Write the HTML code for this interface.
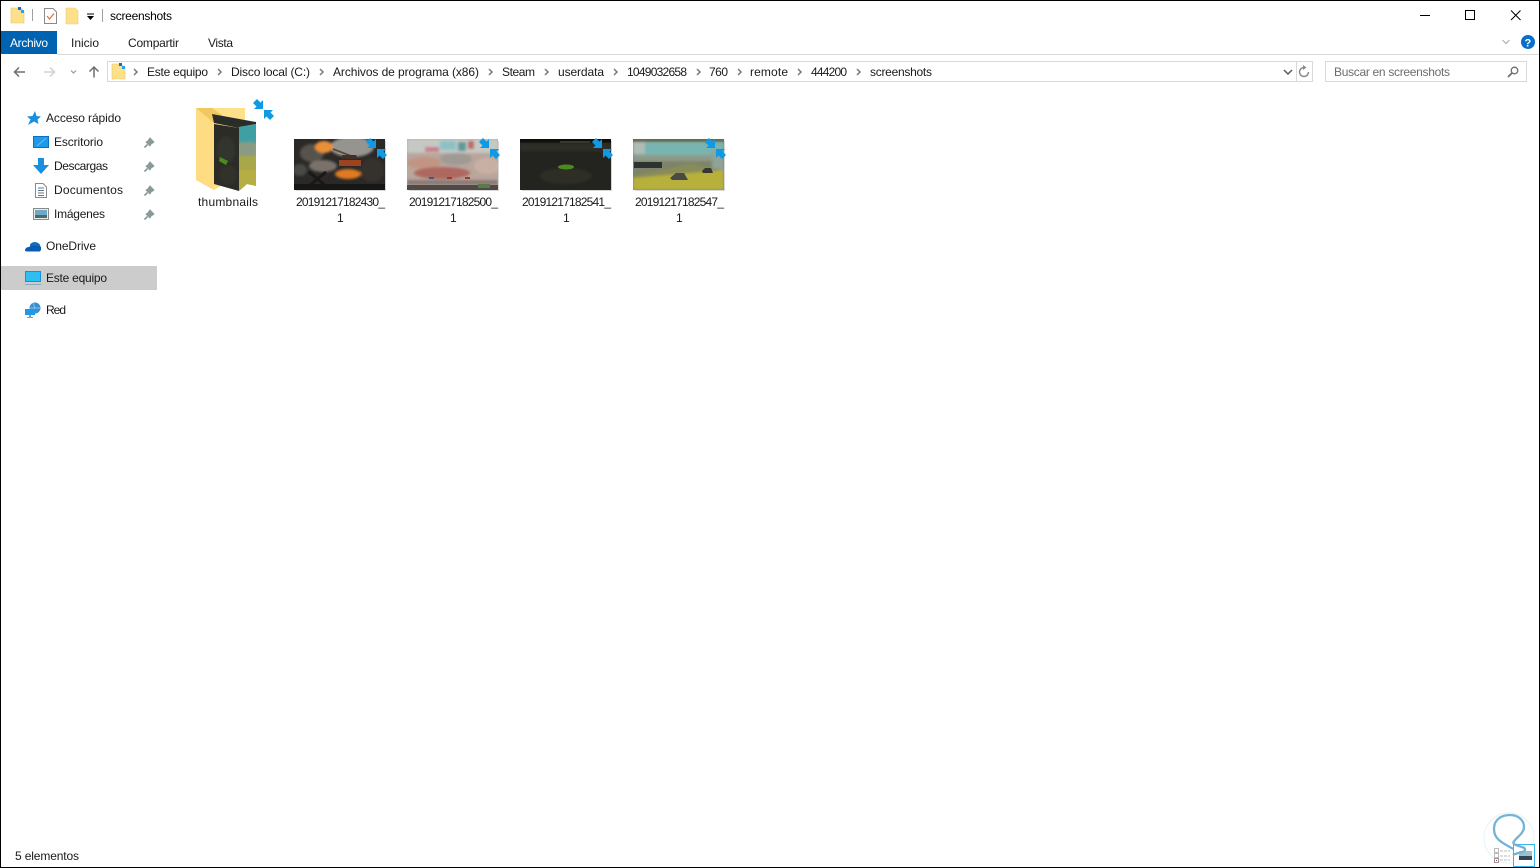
<!DOCTYPE html>
<html lang="es"><head><meta charset="utf-8"><title>screenshots</title>
<style>
html,body{margin:0;padding:0;background:#fff;width:1540px;height:868px;overflow:hidden}
svg{display:block}
text{font-family:"Liberation Sans",sans-serif;font-size:12px;fill:#000}
.g{fill:#1a1a1a}
</style></head><body>
<svg width="1540" height="868" viewBox="0 0 1540 868" xmlns="http://www.w3.org/2000/svg">
<defs>
<g id="arr">
<path d="M10 10 L1 10 L3.500 7.500 L0 4 L4 0 L7.500 3.500 L10 1Z" fill="#0f9ae6"/>
<path d="M11 11 L20 11 L17.500 13.500 L21 17 L17 21 L13.500 17.500 L11 20Z" fill="#0f9ae6"/>
</g>
<path id="pin" d="M3.500 7.500 L0.500 10.500 M2 4.500 L6.500 9 M3.500 5 L6 1.500 L9.500 5 L6 7.500" stroke="#8a9a9a" stroke-width="1.600" fill="#8a9a9a"/>
<path id="chev" d="M0 0 L3 3 L0 6" fill="none" stroke="#7a7a7a" stroke-width="1.500"/>
<filter id="b1" x="-30%" y="-30%" width="160%" height="160%"><feGaussianBlur stdDeviation="1.300"/></filter>
<clipPath id="c1"><rect x="294" y="139" width="91" height="51"/></clipPath>
<clipPath id="c2"><rect x="407" y="139" width="91" height="51"/></clipPath>
<clipPath id="c3"><rect x="520" y="139" width="91" height="51"/></clipPath>
<clipPath id="c4"><rect x="633" y="139" width="91" height="51"/></clipPath>
<clipPath id="cf"><path d="M214 124 L239 128 V191 L214 184Z"/></clipPath>
<clipPath id="cr"><path d="M239 127 L256 124 V186 L247 184 L239 191Z"/></clipPath>
</defs>

<!-- window frame -->
<rect x=".5" y=".5" width="1539" height="867" fill="#fff" stroke="#000"/>

<!-- title bar icons -->
<path d="M11 8 H21 L24 11 V23 H11Z" fill="#fde08a" stroke="#e8c468" stroke-width=".6"/>
<rect x="18" y="7" width="3" height="3" fill="#0f6fc0"/><rect x="21" y="10" width="3" height="3" fill="#2ba0e6"/>
<rect x="32" y="9" width="1" height="12" fill="#a0a0a0"/>
<path d="M44.500 8.500 H53 L56.500 12 V23.500 H44.500Z" fill="#fff" stroke="#8a8a8a"/>
<path d="M47 16 L49.500 19 L54 13.500" fill="none" stroke="#e0763a" stroke-width="1.300"/>
<path d="M66 8 H75 L78 11 V24 H66Z" fill="#fddf8c" stroke="#f0cc70" stroke-width=".6"/>
<rect x="87" y="13.500" width="7" height="1" fill="#000"/><path d="M87 16 H94 L90.500 20Z" fill="#000"/>
<rect x="102" y="9" width="1" height="13" fill="#a0a0a0"/>
<text x="110" y="20" textLength="62">screenshots</text>

<!-- window controls -->
<rect x="1420" y="15" width="10" height="1" fill="#000"/>
<rect x="1465.500" y="10.500" width="9" height="9" fill="none" stroke="#000"/>
<path d="M1511 10.500 L1520.500 20 M1520.500 10.500 L1511 20" stroke="#000" stroke-width="1" fill="none"/>

<!-- ribbon -->
<rect x="1" y="31" width="56" height="23" fill="#0063b1"/>
<text x="10" y="47" textLength="38" style="fill:#fff">Archivo</text>
<text x="71" y="47" textLength="28" class="g">Inicio</text>
<text x="128" y="47" textLength="51" class="g">Compartir</text>
<text x="208" y="47" textLength="25" class="g">Vista</text>
<rect x="57" y="54" width="1482" height="1" fill="#d9d9d9"/>
<path d="M1502.500 40 L1506 43.500 L1509.500 40" fill="none" stroke="#b0b0b0" stroke-width="1.200"/>
<circle cx="1528" cy="42" r="7" fill="#0a6fc8"/>
<text x="1524.500" y="46.500" style="fill:#fff;font-size:11px;font-weight:bold">?</text>

<!-- nav buttons -->
<path d="M15 72 H25 M19 67.500 L14.500 72 L19 76.500" fill="none" stroke="#6e6e6e" stroke-width="1.500"/>
<path d="M44 72 H54 M50 67.500 L54.500 72 L50 76.500" fill="none" stroke="#d2d2d2" stroke-width="1.500"/>
<path d="M71 70.500 L73.500 73 L76 70.500" fill="none" stroke="#9a9a9a" stroke-width="1.200"/>
<path d="M94 77.500 V67 M89.500 71.500 L94 67 L98.500 71.500" fill="none" stroke="#6e6e6e" stroke-width="1.500"/>

<!-- address bar -->
<rect x="107.500" y="61.500" width="1205" height="20" fill="#fff" stroke="#d9d9d9"/>
<path d="M112 64 H121 L125 68 V79 H112Z" fill="#fde08a" stroke="#eec86c" stroke-width=".6"/>
<rect x="119" y="63" width="3" height="3" fill="#0f6fc0"/><rect x="122" y="66" width="3" height="3" fill="#2ba0e6"/>
<use href="#chev" x="134" y="69"/>
<text x="147" y="76" textLength="61" class="g">Este equipo</text>
<use href="#chev" x="218" y="69"/>
<text x="231" y="76" textLength="79" class="g">Disco local (C:)</text>
<use href="#chev" x="320" y="69"/>
<text x="333" y="76" textLength="146" class="g">Archivos de programa (x86)</text>
<use href="#chev" x="489" y="69"/>
<text x="502" y="76" textLength="33" class="g">Steam</text>
<use href="#chev" x="545" y="69"/>
<text x="558" y="76" textLength="46" class="g">userdata</text>
<use href="#chev" x="614" y="69"/>
<text x="627" y="76" textLength="60" class="g">1049032658</text>
<use href="#chev" x="697" y="69"/>
<text x="709" y="76" textLength="19" class="g">760</text>
<use href="#chev" x="738" y="69"/>
<text x="750" y="76" textLength="38" class="g">remote</text>
<use href="#chev" x="798" y="69"/>
<text x="811" y="76" textLength="36" class="g">444200</text>
<use href="#chev" x="857" y="69"/>
<text x="870" y="76" textLength="62" class="g">screenshots</text>
<path d="M1284 70 L1288 74 L1292 70" fill="none" stroke="#5a5a5a" stroke-width="1.500"/>
<rect x="1296" y="62" width="1" height="19" fill="#d9d9d9"/>
<path d="M1308.500 72 A4.500 4.500 0 1 1 1304 67.500" fill="none" stroke="#8a8a8a" stroke-width="1.500"/>
<path d="M1303 65 L1306.500 67.500 L1303 70Z" fill="#8a8a8a"/>

<!-- search -->
<rect x="1325.500" y="61.500" width="201" height="20" fill="#fff" stroke="#d9d9d9"/>
<text x="1334" y="76" textLength="116" style="fill:#6d6d6d">Buscar en screenshots</text>
<circle cx="1514.500" cy="70.500" r="3.300" fill="none" stroke="#6e6e6e" stroke-width="1.300"/>
<path d="M1512 73 L1508 77" stroke="#6e6e6e" stroke-width="1.800"/>

<!-- nav pane -->
<path d="M35 111 L36.500 116 L41 116.500 L37.500 119.500 L38.500 124 L34 121.500 L28 125 L30.500 119.500 L27 116.500 L32.500 116Z" fill="#1a8fdf"/>
<text x="46" y="122" textLength="75" class="g">Acceso rápido</text>

<rect x="33.500" y="136.500" width="15" height="11" fill="#1e9be8" stroke="#0a6fc8"/>
<path d="M37 146 L46 138" stroke="#7cc8f2" stroke-width=".8"/>
<text x="54" y="146" textLength="49" class="g">Escritorio</text>
<use href="#pin" x="144" y="137"/>

<path d="M38 158 H44 V165 H49 L41 174 L33 165 H38Z" fill="#1a8fdf"/>
<text x="54" y="170" textLength="54" class="g">Descargas</text>
<use href="#pin" x="144" y="161"/>

<path d="M35.500 183.500 H43 L46.500 187 V197.500 H35.500Z" fill="#fff" stroke="#8a8a8a"/>
<path d="M38 188 H44 M38 190.500 H44 M38 193 H44 M38 195.500 H44" stroke="#5a7a90" stroke-width="1"/>
<text x="54" y="194" textLength="69" class="g">Documentos</text>
<use href="#pin" x="144" y="185"/>

<rect x="33.500" y="208.500" width="15" height="11" fill="#e8eef0" stroke="#8a8a8a"/>
<rect x="35" y="210" width="12" height="5" fill="#6fa9c4"/><rect x="35" y="215" width="12" height="3" fill="#4c6a6a"/>
<text x="54" y="218" textLength="51" class="g">Imágenes</text>
<use href="#pin" x="144" y="209"/>

<path d="M30 244.500 Q33 241 37 242.500 Q40 243.500 40.500 246.500 L30 247Z" fill="#0f6fc6"/>
<path d="M25 251 Q25 247 29 247 Q31 245 35 246 Q38 244.500 41 247 Q41.500 250 40 251.500 H27Z" fill="#0a5cb0"/>
<text x="46" y="250" textLength="50" class="g">OneDrive</text>

<rect x="1" y="266" width="156" height="24" fill="#cccccc"/>
<rect x="25.500" y="271.500" width="15" height="10" fill="#2cc0f2" stroke="#1a8fdf"/>
<rect x="25" y="284" width="16" height="1" fill="#8fa9b8"/>
<text x="46" y="282" textLength="61" class="g">Este equipo</text>

<circle cx="35" cy="308" r="5.500" fill="#3a8fd0"/>
<path d="M33 303 Q36 308 33 313 M30 308 H40" stroke="#a8d4ee" stroke-width=".7" fill="none"/>
<rect x="25" y="309" width="10" height="6" fill="#1e9be8"/>
<rect x="29" y="315" width="2" height="2" fill="#8a9aa8"/><rect x="27" y="317" width="6" height="1" fill="#8a9aa8"/>
<text x="46" y="314" textLength="20" class="g">Red</text>

<!-- folder thumbnails -->
<path d="M196 108 H245 V182 H228 L214 190 L196 180Z" fill="#fde08a"/>
<path d="M196 108 L214 123 V190 L196 180Z" fill="#fddc84"/>
<path d="M196 108 H212 L222 115 L214 123Z" fill="#f1c85f"/>
<path d="M212 114 L256 122 V126 L239 128 L214 123Z" fill="#2a2c2a"/>
<path d="M214 124 L239 128 V191 L214 184Z" fill="#2b2c26"/>
<g clip-path="url(#cf)">
<ellipse cx="226" cy="150" rx="9" ry="14" fill="#33342d" filter="url(#b1)"/>
<ellipse cx="228" cy="175" rx="9" ry="10" fill="#30312a" filter="url(#b1)"/>
<path d="M220 157 L228 161 L226 165 L219 161Z" fill="#4c8a1e"/>
</g>
<path d="M239 127 L256 124 V186 L247 184 L239 191Z" fill="#a8a848"/>
<g clip-path="url(#cr)">
<rect x="239" y="124" width="17" height="20" fill="#3fa0a4"/>
<rect x="239" y="142" width="17" height="14" fill="#8a9a84" filter="url(#b1)"/>
<rect x="239" y="170" width="17" height="20" fill="#b4ae44"/>
</g>
<use href="#arr" x="253" y="99"/>
<text x="198" y="206" textLength="60" class="g">thumbnails</text>

<!-- image 1 -->
<rect x="294" y="139" width="91" height="51" fill="#2a2927"/>
<rect x="385" y="141" width="1" height="50" fill="#d8d8d8"/><rect x="296" y="190" width="90" height="1" fill="#d8d8d8"/>
<g clip-path="url(#c1)">
<g filter="url(#b1)">
<ellipse cx="352" cy="147" rx="22" ry="10" fill="#96948f"/>
<ellipse cx="312" cy="153" rx="12" ry="9" fill="#57534e"/>
<ellipse cx="323" cy="166" rx="14" ry="6" fill="#7a726a"/>
<ellipse cx="300" cy="170" rx="7" ry="6" fill="#4a4844"/>
<ellipse cx="372" cy="170" rx="12" ry="12" fill="#35332f"/>
<ellipse cx="324" cy="147" rx="9" ry="6" fill="#e89038"/>
<ellipse cx="348" cy="174" rx="13" ry="5" fill="#df7a22"/>
</g>
<path d="M333 149 L354 157" stroke="#5a4030" stroke-width="1.500"/>
<path d="M342 155 H356 L358 159 H342Z" fill="#40302a"/>
<rect x="339" y="160" width="22" height="6" fill="#9c4420"/>
<rect x="294" y="184" width="91" height="6" fill="#161615"/>
<path d="M309 172 L326 186 M326 172 L309 186" stroke="#191816" stroke-width="3"/>
</g>
<use href="#arr" x="366" y="138"/>
<text x="296" y="206" textLength="89" class="g">20191217182430_</text>
<text x="337" y="222" class="g">1</text>

<!-- image 2 -->
<rect x="407" y="139" width="91" height="51" fill="#b9a69c"/>
<rect x="498" y="141" width="1" height="50" fill="#d8d8d8"/><rect x="409" y="190" width="90" height="1" fill="#d8d8d8"/>
<g clip-path="url(#c2)">
<g filter="url(#b1)">
<rect x="407" y="139" width="91" height="14" fill="#c6c8c4"/>
<rect x="440" y="141" width="16" height="9" fill="#8cc2c6"/>
<rect x="458" y="142" width="8" height="9" fill="#5f9a9a"/>
<rect x="468" y="141" width="6" height="8" fill="#bb6a62"/>
<rect x="425" y="147" width="14" height="5" fill="#c9808a"/>
<ellipse cx="456" cy="159" rx="16" ry="6" fill="#9f9a94"/>
<ellipse cx="424" cy="163" rx="17" ry="6" fill="#c29484"/>
<ellipse cx="487" cy="166" rx="13" ry="8" fill="#c9b0a4"/>
<ellipse cx="442" cy="173" rx="28" ry="6" fill="#ae675e"/>
<rect x="407" y="180" width="91" height="5" fill="#8a7a76"/>
</g>
<rect x="407" y="185" width="91" height="5" fill="#4f4a47"/>
<rect x="478" y="184" width="12" height="4" fill="#5a7a4a"/>
<rect x="429" y="177" width="5" height="2" fill="#3a5a8a"/><rect x="447" y="177" width="5" height="2" fill="#9c3a2c"/><rect x="465" y="177" width="5" height="2" fill="#9c3a2c"/>
</g>
<use href="#arr" x="479" y="138"/>
<text x="409" y="206" textLength="89" class="g">20191217182500_</text>
<text x="450" y="222" class="g">1</text>

<!-- image 3 -->
<rect x="520" y="139" width="91" height="51" fill="#23241f"/>
<rect x="611" y="141" width="1" height="50" fill="#d8d8d8"/><rect x="522" y="190" width="90" height="1" fill="#d8d8d8"/>
<g clip-path="url(#c3)">
<rect x="520" y="139" width="91" height="4" fill="#0e0e0d"/>
<rect x="560" y="141" width="30" height="2" fill="#3a3a34"/>
<rect x="520" y="143" width="91" height="8" fill="#2d2f28" filter="url(#b1)"/>
<ellipse cx="566" cy="176" rx="26" ry="8" fill="#2e2f28" filter="url(#b1)"/>
<ellipse cx="566" cy="167" rx="8" ry="2.500" fill="#4c8a1e"/>
</g>
<use href="#arr" x="592" y="138"/>
<text x="522" y="206" textLength="89" class="g">20191217182541_</text>
<text x="563" y="222" class="g">1</text>

<!-- image 4 -->
<rect x="633" y="139" width="91" height="51" fill="#7d8468"/>
<rect x="724" y="141" width="1" height="50" fill="#d8d8d8"/><rect x="635" y="190" width="90" height="1" fill="#d8d8d8"/>
<g clip-path="url(#c4)">
<rect x="633" y="139" width="91" height="3" fill="#5f6a58"/>
<g filter="url(#b1)">
<rect x="633" y="142" width="91" height="13" fill="#78b4b0"/>
<rect x="633" y="142" width="12" height="12" fill="#b0bcb4"/>
<rect x="633" y="155" width="91" height="6" fill="#8d9a88"/>
<rect x="712" y="150" width="12" height="24" fill="#8fa39a"/>
<path d="M633 176 L690 164 L724 170 V178 L633 190Z" fill="#8a8c58"/>
<path d="M633 190 L633 178 L724 170 V190Z" fill="#b7b03a"/>
</g>
<rect x="634" y="162" width="28" height="6" fill="#2e3230"/>
<path d="M670 178 L676 173 H684 L688 180 H672Z" fill="#4a4a44"/>
<path d="M702 171 L705 168 H711 L713 173 H703Z" fill="#35362f"/>
</g>
<use href="#arr" x="705" y="138"/>
<text x="635" y="206" textLength="89" class="g">20191217182547_</text>
<text x="676" y="222" class="g">1</text>

<!-- status bar -->
<text x="15" y="860" textLength="64" class="g">5 elementos</text>

<!-- watermark -->
<circle cx="1509" cy="838" r="25" fill="none" stroke="#e4f2f8" stroke-width="1"/>
<path d="M1515 850 C1503 843 1494 840 1494 829 C1494 819 1502 815 1510 815 C1518 815 1524 820 1524 827 C1524 834 1515 838 1513 843" fill="none" stroke="#74b2d8" stroke-width="2.300"/>
<rect x="1494.500" y="848.500" width="4" height="4" fill="#fff" stroke="#bbb"/>
<rect x="1494.500" y="853.500" width="4" height="4" fill="#fff" stroke="#bbb"/>
<rect x="1494.500" y="858.500" width="4" height="4" fill="#fff" stroke="#999"/><rect x="1496" y="860" width="1" height="1" fill="#b03030"/>
<path d="M1500 851 H1510 M1500 856 H1510 M1500 860 H1510" stroke="#bbb" stroke-dasharray="3 1"/>
<rect x="1513.500" y="844.500" width="21" height="22" fill="#fff" stroke="#35b8f0"/>
<rect x="1519" y="851" width="13" height="5" fill="#9fc0c8"/><rect x="1519" y="856" width="13" height="4" fill="#345"/>
<path d="M1513 843 C1516 847 1526 846 1525 850 C1524 853 1515 853 1513 855" fill="none" stroke="#74b2d8" stroke-width="2.300"/>
</svg>
</body></html>
